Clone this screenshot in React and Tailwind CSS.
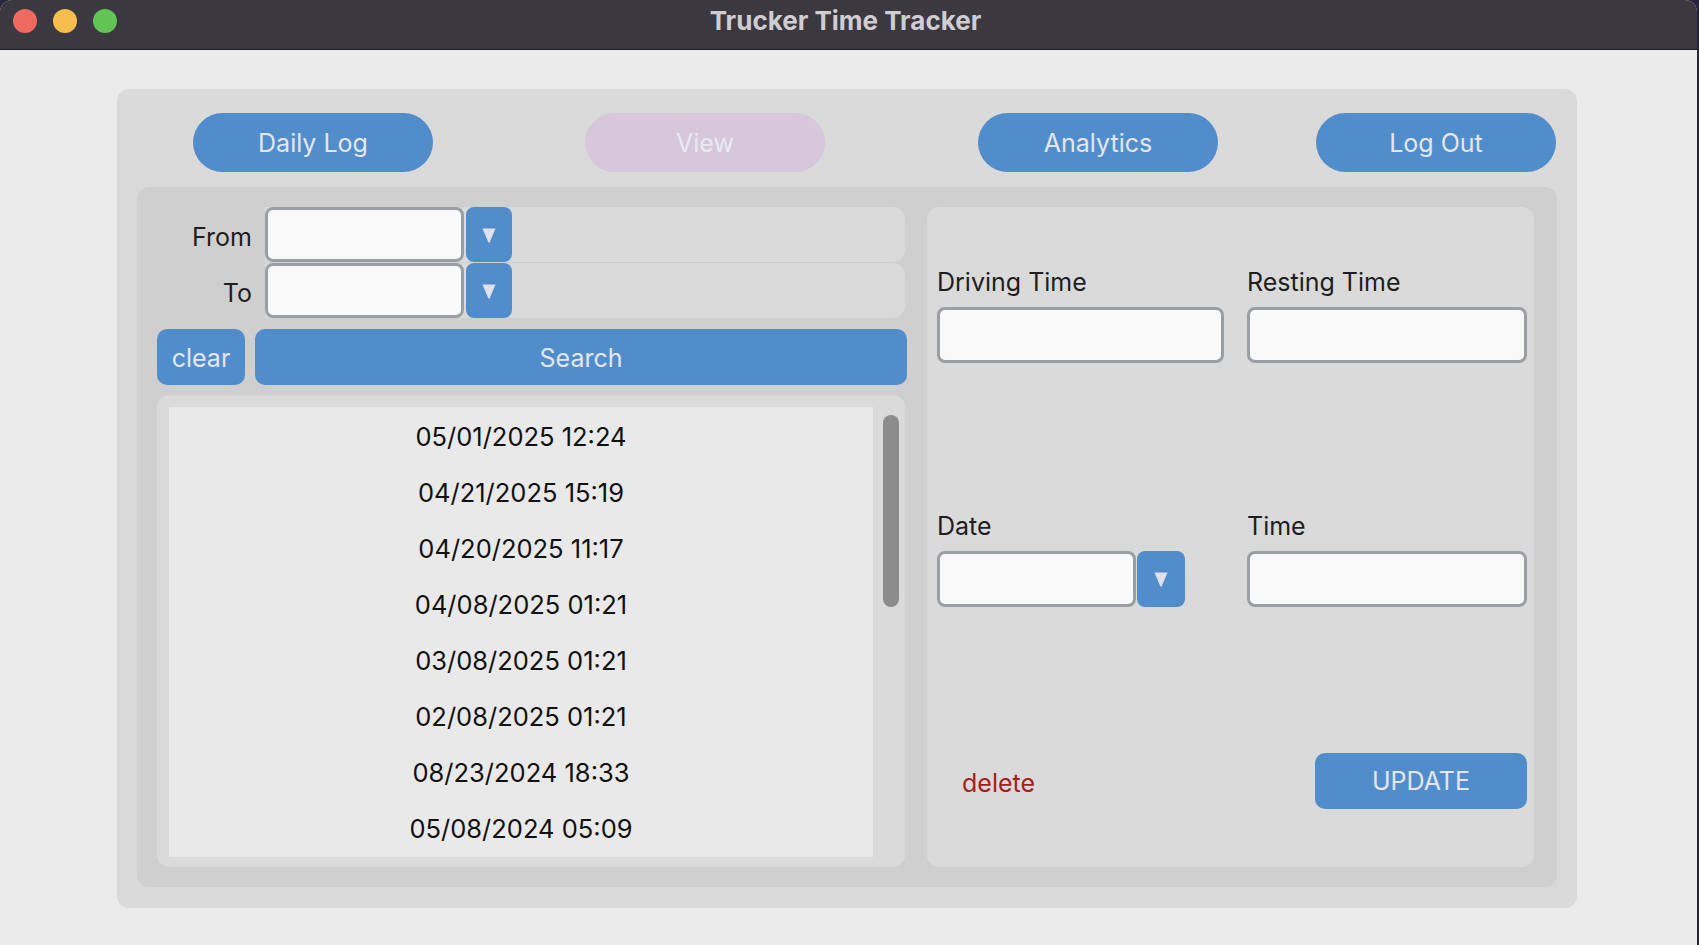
import { useState } from "react";

const entries = [
  "05/01/2025 12:24",
  "04/21/2025 15:19",
  "04/20/2025 11:17",
  "04/08/2025 01:21",
  "03/08/2025 01:21",
  "02/08/2025 01:21",
  "08/23/2024 18:33",
  "05/08/2024 05:09",
];

const font = { fontFamily: "Inter, 'Liberation Sans', sans-serif" };

function DropArrow({ className = "" }) {
  return (
    <button className={`flex items-center justify-center bg-[#528dcb] rounded-[8px] ${className}`}>
      <svg width="16" height="18" viewBox="0 0 16 18">
        <path d="M1.5 2.5 H14.5 L8.8 16 Q8 17.5 7.2 16 Z" fill="#dfe1ee" />
      </svg>
    </button>
  );
}

function TextBox({ className = "" }) {
  return <input className={`bg-[#f9f9f9] border-[3px] border-[#9b9ea2] rounded-[8px] outline-none ${className}`} />;
}

function NavButton({ label, disabled }) {
  return (
    <button
      className={`w-[240px] h-[59px] rounded-full text-[25px] pt-[2px] ${
        disabled ? "bg-[#d6c7db] text-[#e9eaf2]" : "bg-[#528dcb] text-[#e4e7f1]"
      }`}
    >
      {label}
    </button>
  );
}

export default function App() {
  const [selected, setSelected] = useState(null);

  return (
    <div className="w-[1699px] h-[945px] bg-[#2b2440] overflow-hidden" style={font}>
      <div className="w-[1697px] h-[945px] bg-[#ebebeb] rounded-t-[12px] overflow-hidden flex flex-col">
        {/* title bar */}
        <div className="h-[50px] bg-[#3b393f] border-b border-[#1d1c20] grid grid-cols-[1fr_auto_1fr] items-center shrink-0">
          <div className="flex items-center gap-[16px] pl-[13px] -mt-[7px]">
            <span className="w-[24px] h-[24px] rounded-full bg-[#ee6a5f]" />
            <span className="w-[24px] h-[24px] rounded-full bg-[#f5be4f]" />
            <span className="w-[24px] h-[24px] rounded-full bg-[#61c454]" />
          </div>
          <div className="text-[26px] font-bold text-[#cfcdd1] -mt-[8px] pr-[6px]">Trucker Time Tracker</div>
          <div />
        </div>

        {/* body */}
        <div className="pt-[39px] pl-[117px]">
          <div className="w-[1460px] h-[819px] bg-[#dadada] rounded-[12px] pt-[24px] px-[20px]">
            {/* nav */}
            <div className="flex h-[59px] pl-[56px]">
              <NavButton label="Daily Log" />
              <div className="w-[152px]" />
              <NavButton label="View" disabled />
              <div className="w-[153px]" />
              <NavButton label="Analytics" />
              <div className="w-[98px]" />
              <NavButton label="Log Out" />
            </div>

            {/* inner */}
            <div className="mt-[15px] h-[700px] bg-[#cfcfcf] rounded-[12px] p-[20px] flex gap-[22px]">
              {/* left column */}
              <div className="w-[748px] flex flex-col">
                <div className="flex items-center h-[55px]">
                  <span className="w-[95px] text-right text-[25px] text-[#1e1e1e] pt-[6px]">From</span>
                  <div className="ml-[13px] flex-1 h-[55px] bg-[#dadada] rounded-r-[12px] flex gap-[2px]">
                    <TextBox className="w-[199px] h-[55px]" />
                    <DropArrow className="w-[46px] h-[55px]" />
                  </div>
                </div>
                <div className="flex items-center h-[55px] mt-[1px]">
                  <span className="w-[95px] text-right text-[25px] text-[#1e1e1e] pt-[6px]">To</span>
                  <div className="ml-[13px] flex-1 h-[55px] bg-[#dadada] rounded-r-[12px] flex gap-[2px]">
                    <TextBox className="w-[199px] h-[55px]" />
                    <DropArrow className="w-[46px] h-[55px]" />
                  </div>
                </div>

                <div className="flex gap-[10px] mt-[11px] h-[56px] w-[750px]">
                  <button className="w-[88px] bg-[#528dcb] rounded-[10px] text-[25px] text-[#e4e7f1] pt-[4px]">clear</button>
                  <button className="flex-1 bg-[#528dcb] rounded-[10px] text-[25px] text-[#e4e7f1] pt-[4px]">Search</button>
                </div>

                <div className="mt-[10px] h-[472px] bg-[#dadada] rounded-[12px] flex pl-[12px] pt-[12px] pr-[6px]">
                  <div className="w-[704px] h-[450px] bg-[#e9e9e9] flex flex-col">
                    {entries.map((e, i) => (
                      <div
                        key={e}
                        onClick={() => setSelected(i)}
                        className={`h-[56px] shrink-0 flex items-center justify-center text-[25.5px] text-[#111] pt-[4px] ${
                          selected === i ? "bg-[#d0d8e8]" : ""
                        }`}
                      >
                        {e}
                      </div>
                    ))}
                  </div>
                  <div className="ml-[10px] mt-[8px] w-[16px] h-[192px] rounded-full bg-[#8c8c8c]" />
                </div>
              </div>

              {/* right panel */}
              <div className="w-[607px] h-[660px] bg-[#dadada] rounded-[12px] pl-[10px] pt-[59px] flex flex-col">
                <div className="flex gap-[23px]">
                  <div className="w-[287px] flex flex-col gap-[9px]">
                    <span className="h-[32px] leading-[32px] text-[25px] text-[#1e1e1e]">Driving Time</span>
                    <TextBox className="w-[287px] h-[56px]" />
                  </div>
                  <div className="w-[280px] flex flex-col gap-[9px]">
                    <span className="h-[32px] leading-[32px] text-[25px] text-[#1e1e1e]">Resting Time</span>
                    <TextBox className="w-[280px] h-[56px]" />
                  </div>
                </div>

                <div className="flex gap-[23px] mt-[147px]">
                  <div className="w-[287px] flex flex-col gap-[9px]">
                    <span className="h-[32px] leading-[32px] text-[25px] text-[#1e1e1e]">Date</span>
                    <div className="flex gap-[1px]">
                      <TextBox className="w-[199px] h-[56px]" />
                      <DropArrow className="w-[48px] h-[56px]" />
                    </div>
                  </div>
                  <div className="w-[280px] flex flex-col gap-[9px]">
                    <span className="h-[32px] leading-[32px] text-[25px] text-[#1e1e1e]">Time</span>
                    <TextBox className="w-[280px] h-[56px]" />
                  </div>
                </div>

                <div className="flex items-center justify-between mt-[146px] w-[590px] pl-[25px]">
                  <button className="text-[25px] text-[#a6201b] pt-[6px]">delete</button>
                  <button className="w-[212px] h-[56px] bg-[#528dcb] rounded-[10px] text-[25px] text-[#e4e7f1] pt-[2px]">
                    UPDATE
                  </button>
                </div>
              </div>
            </div>
          </div>
        </div>
      </div>
    </div>
  );
}
